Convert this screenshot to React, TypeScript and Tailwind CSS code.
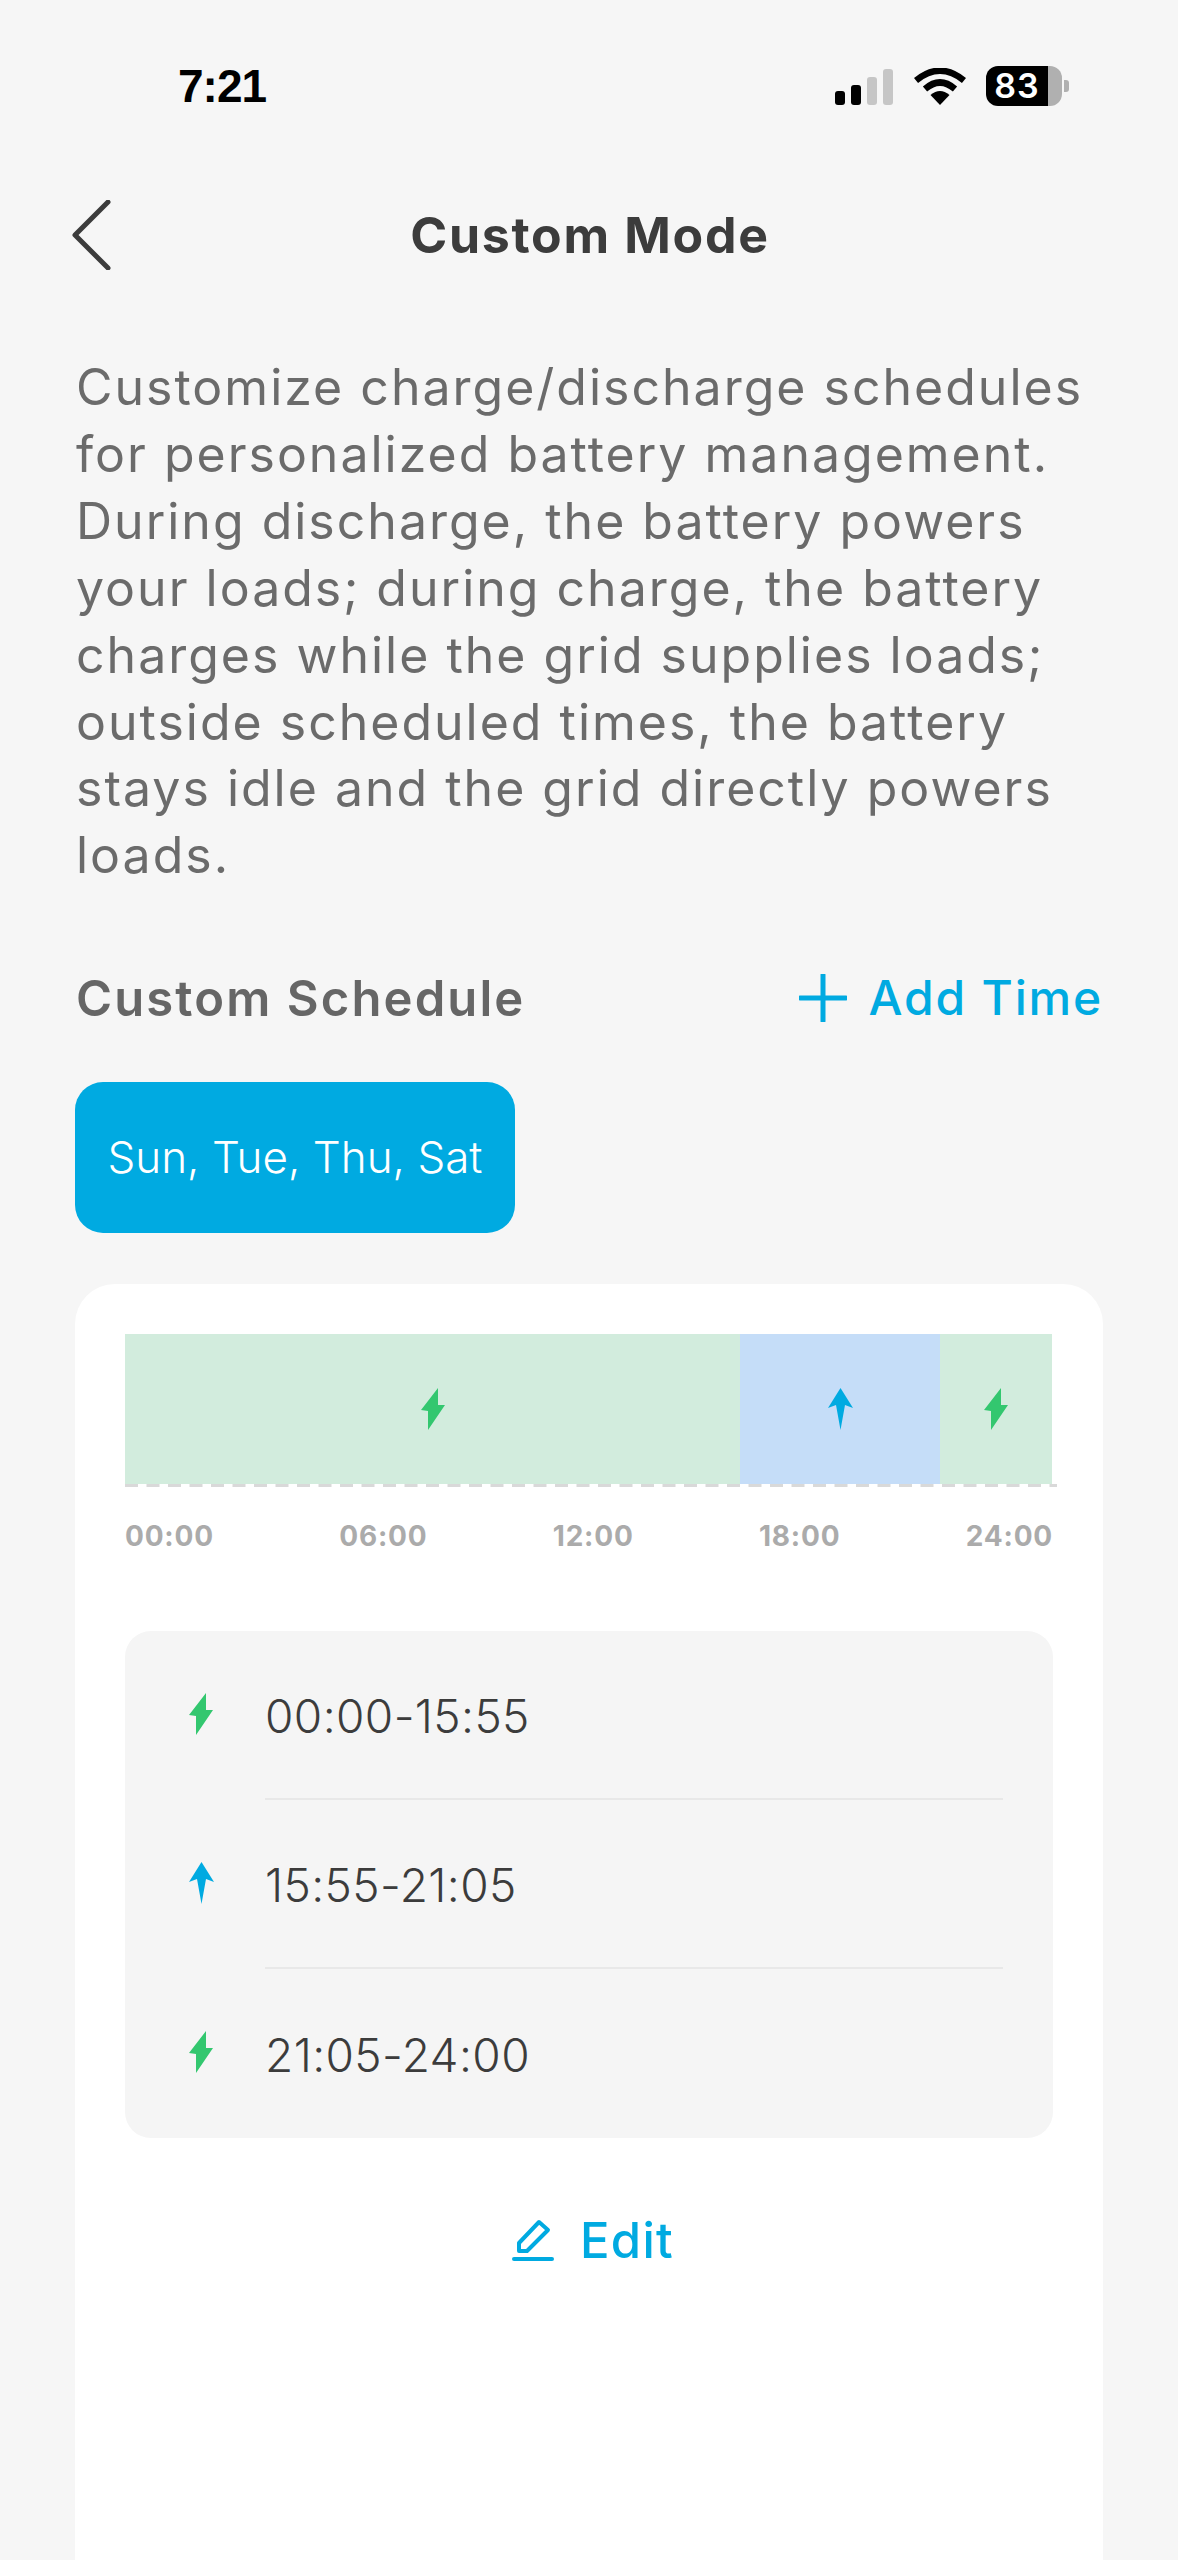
import React from 'react';

const sans = "font-['Inter','Noto_Sans',sans-serif]";

// --- Icons ---
const Bolt = () => (
  <svg width="24" height="42" viewBox="0 0 24 42" className="shrink-0">
    <polygon points="17,0 0,22 7,23 7,42 24,17 17,17" fill="#33C76F" />
  </svg>
);

const ArrowUp = () => (
  <svg width="25" height="42" viewBox="0 0 25 42" className="shrink-0">
    <polygon points="12.5,0 0,20 8,17 12.5,42 17,17 25,20" fill="#00AAE1" />
  </svg>
);

const Wifi = () => (
  <svg width="52" height="37" viewBox="0 0 52 37">
    <path d="M2 12.5 Q26 -7 50 12.5" fill="none" stroke="#000" strokeWidth="6.5" />
    <path d="M11 21 Q26 8 41 21" fill="none" stroke="#000" strokeWidth="6.5" />
    <path d="M16.5 27 Q26 19 35.5 27 L26 37 Z" fill="#000" />
  </svg>
);

const segments = [
  { id: 1, width: 'w-[615px]', color: 'bg-[#D2ECDD]', icon: <Bolt /> },
  { id: 2, width: 'w-[200px]', color: 'bg-[#C5DDF8]', icon: <ArrowUp /> },
  { id: 3, width: 'w-[112px]', color: 'bg-[#D2ECDD]', icon: <Bolt /> },
];

const slots = [
  { id: 1, time: '00:00-15:55', icon: <Bolt /> },
  { id: 2, time: '15:55-21:05', icon: <ArrowUp /> },
  { id: 3, time: '21:05-24:00', icon: <Bolt /> },
];

const App: React.FC = () => {
  return (
    <div className={`${sans} w-[1178px] h-[2560px] overflow-hidden bg-[#F6F6F6] flex flex-col`}>
      {/* --- STATUS BAR --- */}
      <div className="h-[66px] shrink-0" />
      <div className="h-[40px] shrink-0 flex items-center justify-between pl-[178px] pr-[109px]">
        <span className="font-['Liberation_Sans',sans-serif] font-bold text-[46px] leading-[40px] tracking-[-1px] text-black">7:21</span>
        <div className="flex items-center">
          <div className="flex items-end gap-[6px] h-[36px] mt-[2px]">
            <div className="w-[10px] h-[14px] rounded-[3px] bg-black" />
            <div className="w-[10px] h-[20px] rounded-[3px] bg-black" />
            <div className="w-[10px] h-[28px] rounded-[3px] bg-[#C6C6C6]" />
            <div className="w-[10px] h-[36px] rounded-[3px] bg-[#C6C6C6]" />
          </div>
          <div className="ml-[21px] mr-[20px] flex"><Wifi /></div>
          <div className="flex items-center">
            <div className="w-[76px] h-[40px] rounded-[12px] overflow-hidden flex">
              <div className="w-[62px] bg-black text-white text-[34px] leading-[40px] font-semibold tracking-[1px] text-center">83</div>
              <div className="flex-1 bg-[#B0B0B0]" />
            </div>
            <div className="ml-[2px] w-[5px] h-[12px] rounded-r-[3px] bg-[#B0B0B0]" />
          </div>
        </div>
      </div>

      {/* --- HEADER --- */}
      <div className="relative h-[70px] mt-[94px] shrink-0 flex items-center justify-center">
        <svg width="40" height="70" viewBox="0 0 40 70" className="absolute left-[72px] top-0">
          <path d="M36 2 L3 35 L36 68" fill="none" stroke="#3C3C3C" strokeWidth="5" strokeLinecap="round" strokeLinejoin="round" />
        </svg>
        <h1 className="text-[50px] leading-[70px] font-bold text-[#3C3C3C] tracking-[1.7px] pl-[2px]">Custom Mode</h1>
      </div>

      {/* --- DESCRIPTION --- */}
      <p className="mt-[84px] mx-[76px] text-[50px] leading-[66.9px] text-[#6B6B6B] whitespace-pre-line tracking-[2px]">
        {`Customize charge/discharge schedules
for personalized battery management.
During discharge, the battery powers
your loads; during charge, the battery
charges while the grid supplies loads;
outside scheduled times, the battery
stays idle and the grid directly powers
loads.`}
      </p>

      {/* --- SCHEDULE HEADER --- */}
      <div className="mt-[79px] ml-[76px] mr-[75px] h-[60px] flex items-center justify-between">
        <span className="text-[49px] font-semibold text-[#666666] tracking-[2.1px]">Custom Schedule</span>
        <div className="flex items-center gap-[22px]">
          <svg width="48" height="48" viewBox="0 0 48 48">
            <path d="M24 1 V47 M1 24 H47" stroke="#00AAE1" strokeWidth="5" strokeLinecap="round" />
          </svg>
          <span className="text-[48px] font-medium text-[#00AAE1] tracking-[1.8px]">Add Time</span>
        </div>
      </div>

      {/* --- DAY CHIP --- */}
      <div className="mt-[54px] mx-[75px]">
        <div className="w-[440px] h-[151px] rounded-[28px] bg-[#00AAE1] flex items-center justify-center pb-[2px] text-[44px] text-white font-light">
          Sun, Tue, Thu, Sat
        </div>
      </div>

      {/* --- CARD --- */}
      <div className="mt-[51px] mx-[75px] flex-1 bg-white rounded-t-[40px] px-[50px] pt-[50px]">
        <div className="flex h-[150px]">
          {segments.map((s) => (
            <div key={s.id} className={`${s.width} ${s.color} flex items-center justify-center`}>{s.icon}</div>
          ))}
        </div>
        <svg width="932" height="3" className="block">
          <line x1="0" y1="1.5" x2="932" y2="1.5" stroke="#D9D9D9" strokeWidth="3" strokeDasharray="13 8.5" />
        </svg>
        <div className="mt-[31px] flex justify-between text-[28px] leading-[36px] font-bold text-[#ABABAB] tracking-[0.8px]">
          <span>00:00</span>
          <span>06:00</span>
          <span>12:00</span>
          <span>18:00</span>
          <span>24:00</span>
        </div>

        <div className="mt-[77px] h-[507px] bg-[#F5F5F5] rounded-[26px] pl-[64px] pr-[50px] flex flex-col">
          {slots.map((slot, i) => (
            <div key={slot.id} className="flex h-[169px] items-stretch">
              <div className="w-[64px] shrink-0 flex items-center -mt-[4px]">{slot.icon}</div>
              <div className={`ml-[12px] flex-1 flex items-center pt-[3px] text-[46px] text-[#3C3C3C] font-light tracking-[0.4px] ${i < 2 ? 'border-b-2 border-[#E8E8E8]' : ''}`}>
                {slot.time}
              </div>
            </div>
          ))}
        </div>

        <div className="mt-[72px] pl-[8px] flex items-center justify-center gap-[26px] h-[60px]">
          <svg width="42" height="42" viewBox="0 0 42 42" fill="none" stroke="#00AAE1" strokeWidth="4" strokeLinecap="round" strokeLinejoin="round">
            <path d="M7 24 L27 3 L36 11 L15 32 L7 32 Z" />
            <path d="M2 40 H40" />
          </svg>
          <span className="text-[49px] font-medium text-[#00AAE1] tracking-[1.3px]">Edit</span>
        </div>
      </div>
    </div>
  );
};

export default App;
